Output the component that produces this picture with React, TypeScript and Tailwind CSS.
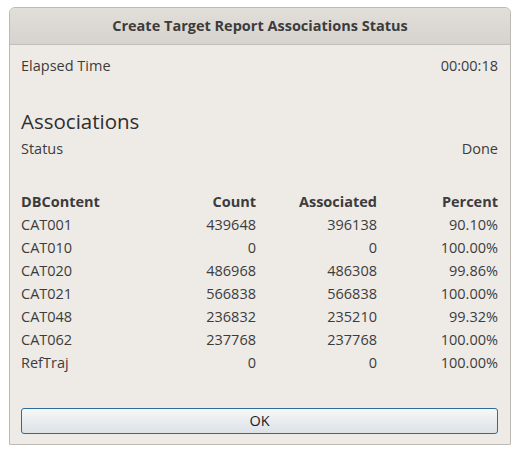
const rows = [
  { name: "CAT001", count: "439648", associated: "396138", percent: "90.10%" },
  { name: "CAT010", count: "0", associated: "0", percent: "100.00%" },
  { name: "CAT020", count: "486968", associated: "486308", percent: "99.86%" },
  { name: "CAT021", count: "566838", associated: "566838", percent: "100.00%" },
  { name: "CAT048", count: "236832", associated: "235210", percent: "99.32%" },
  { name: "CAT062", count: "237768", associated: "237768", percent: "100.00%" },
  { name: "RefTraj", count: "0", associated: "0", percent: "100.00%" },
];

export default function App() {
  return (
    <main
      className="h-[455px] w-[520px] bg-white pl-[9px] pt-[7px] text-[14.5px] text-[#3c3c3c]"
      style={{ fontFamily: '"Open Sans", "DejaVu Sans", sans-serif' }}
    >
      <section className="flex h-[438px] w-[502px] flex-col rounded-t-[6px] border border-[#bdbab6] bg-[#eeebe7]">
        <header className="flex h-[37px] items-center justify-center rounded-t-[6px] border-b border-[#c3c0bb] bg-gradient-to-b from-[#e2dfdb] to-[#d6d3cf] text-[14.5px] font-bold text-[#3c3c3c]">
          Create Target Report Associations Status
        </header>

        <div className="flex flex-1 flex-col pl-[11px] pr-[12px]">
          <div className="mt-[9px] flex h-[23px] items-center justify-between">
            <span>Elapsed Time</span>
            <span>00:00:18</span>
          </div>

          <h1 className="mt-[30px] flex h-[28px] items-center text-[20.5px] text-[#2e2e2e]">Associations</h1>

          <div className="mt-[2px] flex h-[23px] items-center justify-between">
            <span>Status</span>
            <span>Done</span>
          </div>

          <div className="mt-[30px] grid grid-cols-[1fr_121px_121px_121px]">
            <div className="flex h-[23px] items-center font-bold">DBContent</div>
            <div className="flex h-[23px] items-center justify-end font-bold">Count</div>
            <div className="flex h-[23px] items-center justify-end font-bold">Associated</div>
            <div className="flex h-[23px] items-center justify-end font-bold">Percent</div>
            {rows.map((row) => (
              <div key={row.name} className="contents">
                <div className="flex h-[23px] items-center">{row.name}</div>
                <div className="flex h-[23px] items-center justify-end">{row.count}</div>
                <div className="flex h-[23px] items-center justify-end">{row.associated}</div>
                <div className="flex h-[23px] items-center justify-end">{row.percent}</div>
              </div>
            ))}
          </div>

          <button
            type="button"
            className="mt-[34px] flex h-[26px] w-full items-center justify-center rounded-[3px] border border-[#2f6b98] bg-gradient-to-b from-[#f6f7f8] to-[#dde2e7] text-[14.5px] text-[#1e1e1e]"
          >
            OK
          </button>
        </div>
      </section>
    </main>
  );
}
